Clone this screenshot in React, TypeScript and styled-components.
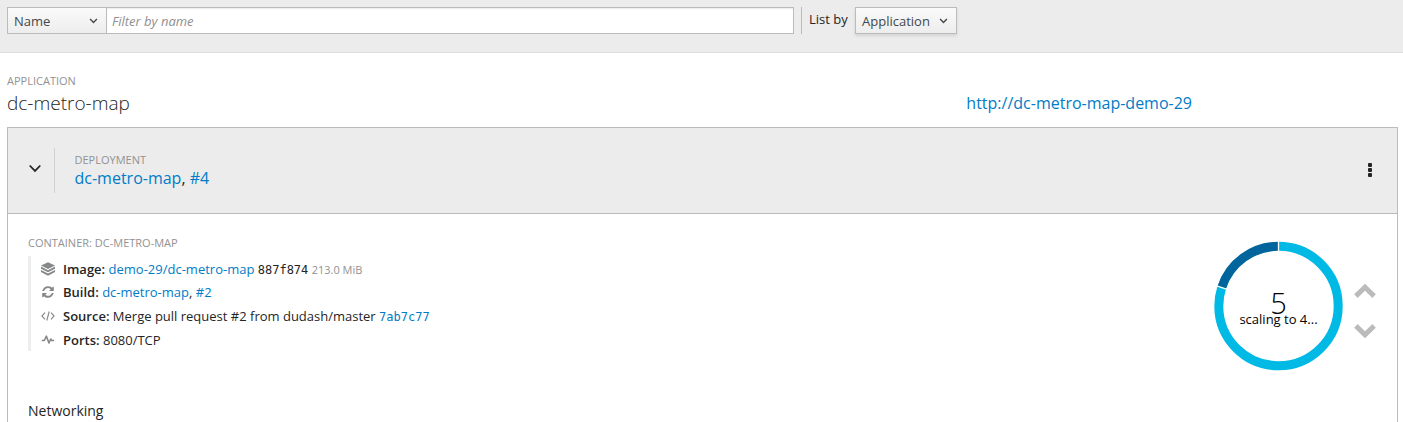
import React from "react";
import styled, { createGlobalStyle } from "styled-components";

const GlobalStyle = createGlobalStyle`
  * { box-sizing: border-box; }
  body {
    margin: 0;
    overflow: hidden;
    background: #fff;
    color: #252525;
    font-family: "Open Sans", "Noto Sans", sans-serif;
    font-size: 13px;
    line-height: 20px;
  }
`;

const Page = styled.main`
  height: 422px;
  overflow: hidden;
`;

const Toolbar = styled.header`
  display: flex;
  align-items: flex-start;
  height: 53px;
  padding: 7px 7px 0;
  background: #ececec;
  border-bottom: 1px solid #dedede;
`;

const SelectButton = styled.button<{ $width: number; $raised?: boolean }>`
  display: flex;
  align-items: center;
  justify-content: space-between;
  width: ${(p) => p.$width}px;
  height: 27px;
  padding: 1px 8px 0 6px;
  border: 1px solid #bbb;
  background: linear-gradient(#fafafa, #ededed);
  box-shadow: ${(p) => (p.$raised ? "0 2px 3px rgba(3, 3, 3, 0.1)" : "none")};
  color: #43474c;
  font: 400 13px/20px "Open Sans", sans-serif;
`;

const FilterInput = styled.input`
  width: 688px;
  height: 27px;
  margin-left: -1px;
  padding: 1px 5px 0;
  border: 1px solid #bbb;
  border-radius: 0;
  background: #fff;
  box-shadow: inset 0 1px 1px rgba(3, 3, 3, 0.075);
  font: italic 400 13px/20px "Open Sans", sans-serif;
  &::placeholder { color: #8f8f8f; opacity: 1; }
`;

const ListBy = styled.label`
  height: 27px;
  margin: 0 7px;
  padding: 2px 0 0 7px;
  border-left: 1px solid #bbb;
  width: 47px;
  white-space: nowrap;
`;

const AppHeading = styled.section`
  display: flex;
  justify-content: space-between;
  height: 74px;
  padding: 18px 211px 0 7px;
`;

const Eyebrow = styled.div`
  color: #929292;
  font-size: 11px;
  line-height: 20px;
  text-transform: uppercase;
  white-space: nowrap;
`;

const AppName = styled.h1`
  margin: 0;
  font-size: 19px;
  font-weight: 300;
  line-height: 24px;
`;

const Link = styled.a`
  color: #007cc8;
  text-decoration: none;
`;

const RouteLink = styled(Link)`
  padding-top: 21px;
  font-size: 16px;
  line-height: 22px;
`;

const Panel = styled.section`
  height: 310px;
  margin: 0 5px 0 7px;
  border: 1px solid #bbb;
`;

const PanelHeader = styled.div`
  display: flex;
  align-items: center;
  height: 86px;
  padding: 0 24px 0 20px;
  border-bottom: 1px solid #bbb;
  background: #ececec;
`;

const Toggle = styled.div`
  display: flex;
  align-items: center;
  width: 27px;
  height: 45px;
  border-right: 1px solid #d1d1d1;
  padding-bottom: 4px;
`;

const Deployment = styled.div`
  flex: 1;
  padding: 0 0 4px 19.500px;
`;

const DeploymentName = styled.div`
  font-size: 16px;
  line-height: 20px;
  margin-top: -2px;
`;

const PanelBody = styled.div`
  display: flex;
  justify-content: space-between;
  height: 172px;
  padding: 19px 21px 0 20px;
`;

const Details = styled.ul`
  margin: 3px 0 0;
  padding: 0.85px 0 0 10px;
  height: 95px;
  border-left: 3px solid #ededed;
  list-style: none;
`;

const Detail = styled.li`
  display: flex;
  align-items: center;
  height: 23.7px;
  white-space: nowrap;
  svg { margin-right: 8px; }
`;

const Bold = styled.b`
  font-weight: 600;
`;

const Hash = styled.span`
  font-family: "DejaVu Sans Mono", monospace;
  font-size: 12px;
  line-height: 0;
`;

const Size = styled.span`
  color: #929292;
  font-size: 11px;
  line-height: 0;
`;

const Scaling = styled.div`
  display: flex;
  align-items: center;
  height: 130px;
  margin-top: 8px;
`;

const Arrows = styled.div`
  display: flex;
  flex-direction: column;
  gap: 24px;
  margin-left: 10px;
  padding-top: 10px;
`;

const Networking = styled.h2`
  margin: 0;
  padding: 15px 20px 0;
  font-size: 14px;
  font-weight: 400;
  line-height: 20px;
`;

const DonutFrame = styled.div`
  display: grid;
  width: 130px;
  height: 130px;
  > * { grid-area: 1 / 1; }
`;

const DonutLabel = styled.div`
  display: flex;
  flex-direction: column;
  align-items: center;
  padding: 48px 1px 0 0;
  color: #000;
`;

const PodCount = styled.span`
  height: 23px;
  font-size: 29px;
  font-weight: 300;
  line-height: 28px;
`;

const PodStatus = styled.span`
  line-height: 14px;
`;

const Caret = ({ size = 9, stroke = 1.4 }: { size?: number; stroke?: number }) => (
  <svg width={size} height={size * 0.65} viewBox="0 0 9 6" fill="none">
    <path d="M1 1l3.500 3.600L8 1" stroke="currentColor" strokeWidth={stroke} />
  </svg>
);

const LayersIcon = () => (
  <svg width="14" height="14" viewBox="0 0 14 14" fill="#858789">
    <path d="M7 .2l7 3.200-7 3.600-7-3.600z" />
    <path d="M0 4.600l7 3.600 7-3.600v2.100l-7 3.600-7-3.600z" />
    <path d="M0 8l7 3.600 7-3.600v2.100l-7 3.600-7-3.600z" />
  </svg>
);

const RefreshIcon = () => (
  <svg width="14" height="14" viewBox="0 0 1536 1536" fill="#858789">
    <path d="M1511 928q0 5-1 7-64 268-268 434.500T764 1536q-146 0-282.500-55T238 1324l-129 129q-19 19-45 19t-45-19-19-45V960q0-26 19-45t45-19h448q26 0 45 19t19 45-19 45l-137 137q71 66 161 102t187 36q134 0 250-65t186-179q11-17 53-117 8-23 30-23h192q13 0 22.500 9.500t9.500 22.500zm25-800v448q0 26-19 45t-45 19h-448q-26 0-45-19t-19-45 19-45l138-138Q969 256 768 256q-134 0-250 65T332 500q-11 17-53 117-8 23-30 23H50q-13 0-22.500-9.500T18 608v-7q65-268 270-434.500T768 0q146 0 284 55.500T1297 212l130-129q19-19 45-19t45 19 19 45z" transform="translate(130 130) scale(.83)" />
  </svg>
);

const CodeIcon = () => (
  <svg width="14" height="14" viewBox="0 0 14 14" fill="none" stroke="#858789" strokeWidth="1.1">
    <path d="M4 3.700L.9 7 4 10.300M10 3.700L13.100 7 10 10.300M8.200 2.500L5.800 11.500" />
  </svg>
);

const PulseIcon = () => (
  <svg width="14" height="14" viewBox="0 0 14 14" fill="none" stroke="#858789" strokeWidth="1.6" strokeLinejoin="round">
    <path d="M.8 7.500h2.500L5.400 3.200l2.600 6.800 1.800-4 .9 1.500h2.500" />
  </svg>
);

const KebabIcon = () => (
  <svg width="6" height="18" viewBox="0 0 6 18" fill="#252525">
    <rect x="1" y="1" width="4" height="4" rx="1" />
    <rect x="1" y="6" width="4" height="4" rx="1" />
    <rect x="1" y="11" width="4" height="4" rx="1" />
  </svg>
);

const Chevron = ({ up }: { up?: boolean }) => (
  <svg width="22" height="16" viewBox="0 0 22 16" fill="none" stroke="#bbb" strokeWidth="5">
    <path d={up ? "M1.900 13.100L11 4.200l9.100 8.900" : "M1.900 2.900L11 11.800l9.100-8.900"} />
  </svg>
);

const PodDonut = () => (
  <DonutFrame>
    <svg width="130" height="130" viewBox="-64.500 -65 130 130">
      <g fill="none" strokeWidth="9">
        <circle r="59.700" stroke="#00b9e4" pathLength="100" strokeDasharray="80 20" transform="rotate(-90)" />
        <circle r="59.700" stroke="#00659c" pathLength="100" strokeDasharray="20 80" transform="rotate(198)" />
      </g>
      <path d="M0 -54V-65M-51.400 -16.700L-61.800 -20.100" stroke="#fff" strokeWidth="1.300" />
    </svg>
    <DonutLabel>
      <PodCount>5</PodCount>
      <PodStatus>scaling to 4...</PodStatus>
    </DonutLabel>
  </DonutFrame>
);

export default function App() {
  return (
    <Page>
      <GlobalStyle />
      <Toolbar>
        <SelectButton $width={100}>Name <Caret /></SelectButton>
        <FilterInput placeholder="Filter by name" />
        <ListBy>List by</ListBy>
        <SelectButton $width={102} $raised>Application <Caret /></SelectButton>
      </Toolbar>
      <AppHeading>
        <div>
          <Eyebrow>Application</Eyebrow>
          <AppName>dc-metro-map</AppName>
        </div>
        <RouteLink>http://dc-metro-map-demo-29</RouteLink>
      </AppHeading>
      <Panel>
        <PanelHeader>
          <Toggle><Caret size={14} stroke={1.15} /></Toggle>
          <Deployment>
            <Eyebrow>Deployment</Eyebrow>
            <DeploymentName><Link>dc-metro-map</Link>, <Link>#4</Link></DeploymentName>
          </Deployment>
          <KebabIcon />
        </PanelHeader>
        <PanelBody>
          <div>
            <Eyebrow>Container: dc-metro-map</Eyebrow>
            <Details>
              <Detail><LayersIcon /><span><Bold>Image:</Bold> <Link>demo-29/dc-metro-map</Link> <Hash>887f874</Hash> <Size>213.0 MiB</Size></span></Detail>
              <Detail><RefreshIcon /><span><Bold>Build:</Bold> <Link>dc-metro-map</Link>, <Link>#2</Link></span></Detail>
              <Detail><CodeIcon /><span><Bold>Source:</Bold> Merge pull request #2 from dudash/master <Link><Hash>7ab7c77</Hash></Link></span></Detail>
              <Detail><PulseIcon /><span><Bold>Ports:</Bold> 8080/TCP</span></Detail>
            </Details>
          </div>
          <Scaling>
            <PodDonut />
            <Arrows><Chevron up /><Chevron /></Arrows>
          </Scaling>
        </PanelBody>
        <Networking>Networking</Networking>
      </Panel>
    </Page>
  );
}
